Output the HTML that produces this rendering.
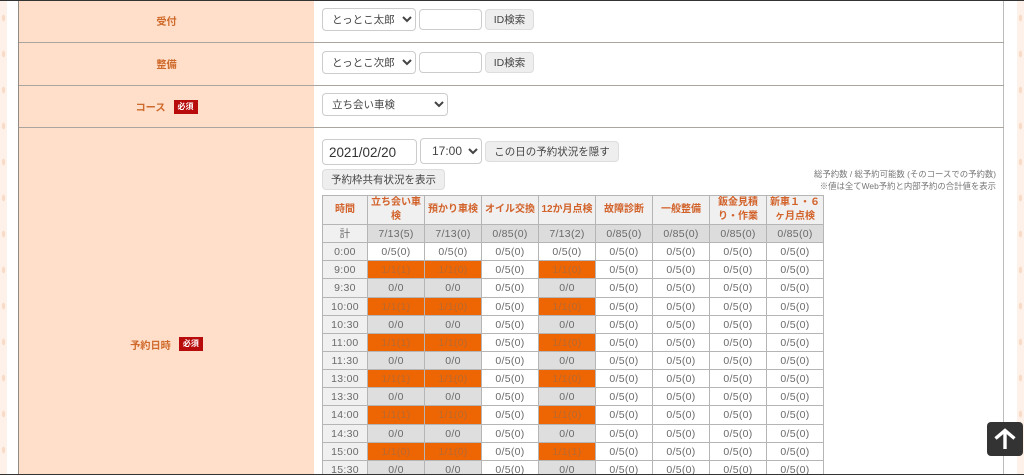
<!DOCTYPE html>
<html lang="ja">
<head>
<meta charset="utf-8">
<title>予約</title>
<style>
html,body{margin:0;padding:0;width:1024px;height:475px;overflow:hidden;background:#fff;}
body{position:relative;font-family:"Liberation Sans","Noto Sans CJK JP",sans-serif;color:#555;}
.abs{position:absolute;}
.strip{position:absolute;top:0;height:475px;background-color:#fdf1e9;
 background-image:radial-gradient(ellipse 2px 4px at center,#f8dcc8 0,#f8dcc8 70%,transparent 100%);
 background-size:7px 36px;background-repeat:repeat-y;}
.th{position:absolute;left:19px;width:295px;background:#ffdfc9;color:#cf6a2c;font-size:10.2px;font-weight:bold;text-align:center;display:flex;align-items:center;justify-content:center;box-sizing:border-box;padding-bottom:2px;}
.req{display:inline-block;background:#b80c0c;color:#fff;font-size:8px;font-weight:bold;width:24px;height:14px;line-height:14px;text-align:center;margin-left:8px;}
.hl{position:absolute;left:19px;width:985px;height:1px;background:#aaa59f;}
select,input,button{position:absolute;box-sizing:border-box;margin:0;font-family:"Liberation Sans","Noto Sans CJK JP",sans-serif;}
select{background:#fff;border:1px solid #ccc;border-radius:4px;font-size:10.5px;color:#444;padding:0 0 0 5px;}
input{background:#fff;border:1px solid #ccc;border-radius:4px;color:#333;}
button{background:#eee;border:1px solid #ddd;border-radius:4px;font-size:10.5px;color:#444;padding:0;white-space:nowrap;}
table{position:absolute;left:322px;top:195px;border-collapse:collapse;table-layout:fixed;width:502px;font-size:10.5px;letter-spacing:.3px;color:#6a6a6a;}
td,th{border:1px solid #b5b5b5;padding:0;text-align:center;height:17.2px;line-height:12px;overflow:hidden;white-space:nowrap;}
td{padding-top:1px;height:16.15px;}
thead th{height:27.5px;background:#f0f0f0;color:#d2622a;font-size:10px;font-weight:bold;white-space:normal;line-height:14px;letter-spacing:0;}
td.t{background:#f0f0f0;}
td.s{background:#dcdcdc;}
td.o{background:#ee6504;color:#b86a30;}
td.g{background:#dedede;}
.hint{position:absolute;right:28px;font-size:8.4px;color:#777;text-align:right;white-space:nowrap;}
</style>
</head>
<body>
<div class="strip" style="left:0;width:7px;"></div>
<div class="strip" style="left:1017px;width:7px;"></div>
<div class="abs" style="left:0;top:0;width:1024px;height:1px;background:#333;"></div>

<div class="th" style="top:1px;height:41px;">受付</div>
<div class="th" style="top:43px;height:42px;">整備</div>
<div class="th" style="top:86px;height:41px;padding-bottom:0;">コース<span class="req">必須</span></div>
<div class="th" style="top:128px;height:346px;padding-bottom:0;align-items:flex-start;padding-top:209px;">予約日時<span class="req">必須</span></div>

<div class="abs" style="left:18px;top:1px;width:1px;height:473px;background:#8f8a85;"></div>
<div class="abs" style="left:1003px;top:1px;width:1px;height:473px;background:#bbb;"></div>
<div class="hl" style="top:42px;"></div>
<div class="hl" style="top:85px;"></div>
<div class="hl" style="top:127px;"></div>

<select style="left:322px;top:8px;width:94px;height:23px;"><option>とっとこ太郎</option></select>
<input style="left:419px;top:9px;width:63px;height:21px;">
<button style="left:485px;top:9px;width:49px;height:21px;">ID検索</button>

<select style="left:322px;top:51px;width:94px;height:23px;"><option>とっとこ次郎</option></select>
<input style="left:419px;top:52px;width:63px;height:21px;">
<button style="left:485px;top:52px;width:49px;height:21px;">ID検索</button>

<select style="left:322px;top:93px;width:126px;height:23px;"><option>立ち会い車検</option></select>

<input style="left:322px;top:139px;width:95px;height:26px;font-size:13.4px;padding:0 6px;" value="2021/02/20">
<select style="left:420px;top:138px;width:62px;height:26px;font-size:12px;padding-left:7px;"><option>17:00</option></select>
<button style="left:485px;top:141px;width:134px;height:21px;">この日の予約状況を隠す</button>
<button style="left:322px;top:169px;width:123px;height:21px;">予約枠共有状況を表示</button>

<div class="hint" style="top:168px;">総予約数 / 総予約可能数 (そのコースでの予約数)</div>
<div class="hint" style="top:180px;">※値は全てWeb予約と内部予約の合計値を表示</div>

<table>
<colgroup><col style="width:45px"><col style="width:57px"><col style="width:57px"><col style="width:57px"><col style="width:57px"><col style="width:57px"><col style="width:57px"><col style="width:57px"><col style="width:57px"></colgroup>
<thead><tr><th>時間</th><th>立ち会い車検</th><th>預かり車検</th><th>オイル交換</th><th>12か月点検</th><th>故障診断</th><th>一般整備</th><th>鈑金見積り・作業</th><th>新車１・６ヶ月点検</th></tr></thead>
<tbody>
<tr><td class="t">計</td><td class="s">7/13(5)</td><td class="s">7/13(0)</td><td class="s">0/85(0)</td><td class="s">7/13(2)</td><td class="s">0/85(0)</td><td class="s">0/85(0)</td><td class="s">0/85(0)</td><td class="s">0/85(0)</td></tr>
<tr><td class="t">0:00</td><td>0/5(0)</td><td>0/5(0)</td><td>0/5(0)</td><td>0/5(0)</td><td>0/5(0)</td><td>0/5(0)</td><td>0/5(0)</td><td>0/5(0)</td></tr>
<tr><td class="t">9:00</td><td class="o">1/1(1)</td><td class="o">1/1(0)</td><td>0/5(0)</td><td class="o">1/1(0)</td><td>0/5(0)</td><td>0/5(0)</td><td>0/5(0)</td><td>0/5(0)</td></tr>
<tr><td class="t">9:30</td><td class="g">0/0</td><td class="g">0/0</td><td>0/5(0)</td><td class="g">0/0</td><td>0/5(0)</td><td>0/5(0)</td><td>0/5(0)</td><td>0/5(0)</td></tr>
<tr><td class="t">10:00</td><td class="o">1/1(1)</td><td class="o">1/1(0)</td><td>0/5(0)</td><td class="o">1/1(0)</td><td>0/5(0)</td><td>0/5(0)</td><td>0/5(0)</td><td>0/5(0)</td></tr>
<tr><td class="t">10:30</td><td class="g">0/0</td><td class="g">0/0</td><td>0/5(0)</td><td class="g">0/0</td><td>0/5(0)</td><td>0/5(0)</td><td>0/5(0)</td><td>0/5(0)</td></tr>
<tr><td class="t">11:00</td><td class="o">1/1(1)</td><td class="o">1/1(0)</td><td>0/5(0)</td><td class="o">1/1(0)</td><td>0/5(0)</td><td>0/5(0)</td><td>0/5(0)</td><td>0/5(0)</td></tr>
<tr><td class="t">11:30</td><td class="g">0/0</td><td class="g">0/0</td><td>0/5(0)</td><td class="g">0/0</td><td>0/5(0)</td><td>0/5(0)</td><td>0/5(0)</td><td>0/5(0)</td></tr>
<tr><td class="t">13:00</td><td class="o">1/1(1)</td><td class="o">1/1(0)</td><td>0/5(0)</td><td class="o">1/1(0)</td><td>0/5(0)</td><td>0/5(0)</td><td>0/5(0)</td><td>0/5(0)</td></tr>
<tr><td class="t">13:30</td><td class="g">0/0</td><td class="g">0/0</td><td>0/5(0)</td><td class="g">0/0</td><td>0/5(0)</td><td>0/5(0)</td><td>0/5(0)</td><td>0/5(0)</td></tr>
<tr><td class="t">14:00</td><td class="o">1/1(1)</td><td class="o">1/1(0)</td><td>0/5(0)</td><td class="o">1/1(0)</td><td>0/5(0)</td><td>0/5(0)</td><td>0/5(0)</td><td>0/5(0)</td></tr>
<tr><td class="t">14:30</td><td class="g">0/0</td><td class="g">0/0</td><td>0/5(0)</td><td class="g">0/0</td><td>0/5(0)</td><td>0/5(0)</td><td>0/5(0)</td><td>0/5(0)</td></tr>
<tr><td class="t">15:00</td><td class="o">1/1(0)</td><td class="o">1/1(0)</td><td>0/5(0)</td><td class="o">1/1(1)</td><td>0/5(0)</td><td>0/5(0)</td><td>0/5(0)</td><td>0/5(0)</td></tr>
<tr><td class="t">15:30</td><td class="g">0/0</td><td class="g">0/0</td><td>0/5(0)</td><td class="g">0/0</td><td>0/5(0)</td><td>0/5(0)</td><td>0/5(0)</td><td>0/5(0)</td></tr>
</tbody>
</table>

<div class="abs" style="left:987px;top:422px;width:36px;height:34px;background:#333;border-radius:4px;">
<svg width="36" height="34" viewBox="0 0 36 34" style="display:block"><path d="M18 27V9M8.5 16.5L18 8.5L27.5 16.5" fill="none" stroke="#fff" stroke-width="3.4"/></svg>
</div>

<div class="abs" style="left:0;top:474px;width:1024px;height:1px;background:#333;"></div>
</body>
</html>
